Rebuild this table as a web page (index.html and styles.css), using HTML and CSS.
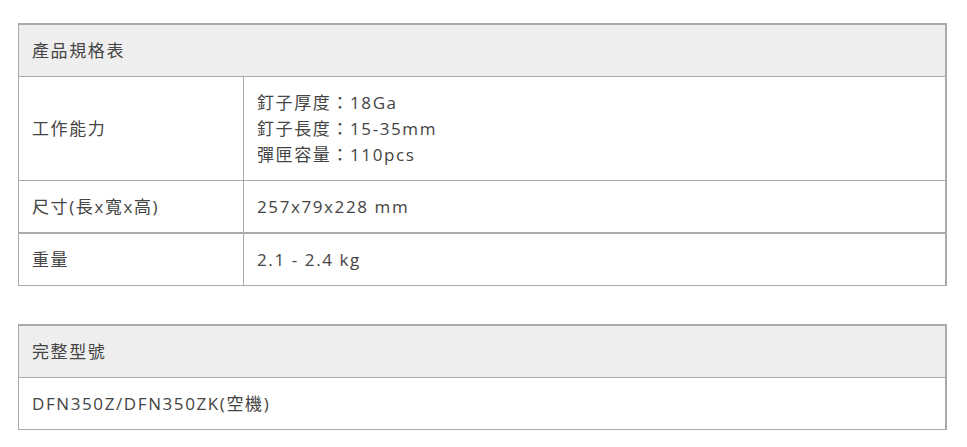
FILE: index.html
```html
<!DOCTYPE html>
<html lang="zh-Hant">
<head>
<meta charset="utf-8">
<link rel="stylesheet" href="styles.css">
</head>
<body>
<div class="page">
  <table class="spec">
    <tr><th colspan="2">產品規格表</th></tr>
    <tr><td class="label">工作能力</td><td>釘子厚度：18Ga<br>釘子長度：15-35mm<br>彈匣容量：110pcs</td></tr>
    <tr><td class="label">尺寸(長x寬x高)</td><td>257x79x228 mm</td></tr>
    <tr class="thick"><td class="label">重量</td><td>2.1 - 2.4 kg</td></tr>
  </table>
  <table class="spec">
    <tr><th>完整型號</th></tr>
    <tr><td>DFN350Z/DFN350ZK(空機)</td></tr>
  </table>
</div>
</body>
</html>
```

FILE: styles.css
```css
html, body {
  margin: 0;
  padding: 0;
  background: #fff;
}
.page {
  padding: 23px 20px 0 18px;
  display: flex;
  flex-direction: column;
  gap: 38px;
  font-family: "Open Sans", "Noto Sans CJK TC", sans-serif;
  font-size: 17px;
  letter-spacing: 1.6px;
  color: #444;
}
.spec {
  width: 929px;
  border-collapse: collapse;
  border-top: 2px solid #aaa;
  border-right: 2px solid #aaa;
  border-left: 1px solid #aaa;
  border-bottom: 1px solid #aaa;
}
.spec th,
.spec td {
  border: 1px solid #aaa;
  padding: 13px 13px 12px;
  line-height: 26px;
  text-align: left;
  font-weight: normal;
  vertical-align: middle;
}
.spec th {
  background: #eee;
}
.spec td.label {
  width: 198px;
}
.spec tr.thick td {
  border-top: 2px solid #aaa;
}
```
